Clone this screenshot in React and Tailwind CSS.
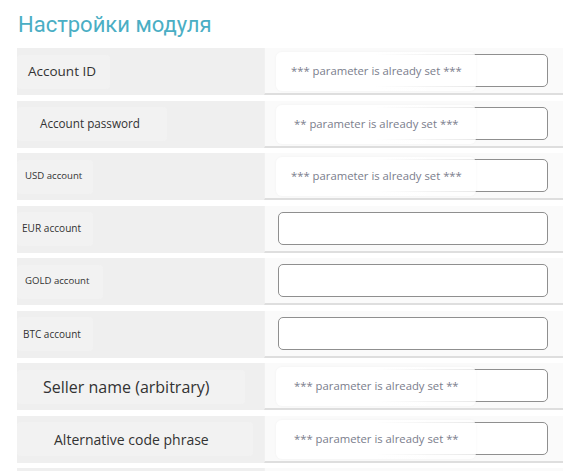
import React from "react";

const rows = [
  { label: "Account ID", size: "text-[13.5px]", px: "pl-[11px]", boxW: "w-[93px]", value: "*** parameter is already set ***", tpl: "pl-[15px]" },
  { label: "Account password", size: "text-[11.7px]", px: "pl-[23px]", boxW: "w-[150px]", value: "** parameter is already set ***", tpl: "pl-[18px]" },
  { label: "USD account", size: "text-[9.6px]", px: "pl-[8px]", boxW: "w-[76px]", value: "*** parameter is already set ***", tpl: "pl-[15px]" },
  { label: "EUR account", size: "text-[10.1px]", px: "pl-[5px]", boxW: "w-[76px]", value: null },
  { label: "GOLD account", size: "text-[9.6px]", px: "pl-[8px]", boxW: "w-[86px]", value: null },
  { label: "BTC account", size: "text-[10px]", px: "pl-[6px]", boxW: "w-[76px]", value: null },
  { label: "Seller name (arbitrary)", size: "text-[16px]", px: "pl-[26px]", boxW: "w-[228px]", value: "*** parameter is already set **", tpl: "pl-[18px]" },
  { label: "Alternative code phrase", size: "text-[14px]", px: "pl-[37px]", boxW: "w-[236px]", value: "*** parameter is already set **", tpl: "pl-[18px]" },
];

function Row({ r }) {
  return (
    <div className="flex h-[47px] mb-[5.5px]">
      <div className="w-[247px] shrink-0 bg-[#efefef] flex items-center">
        {r && (
          <div className={`h-[34px] ${r.boxW} bg-[#f2f2f2] rounded-sm flex items-center ${r.px} whitespace-nowrap ${r.size} text-[#333]`}>
            {r.label}
          </div>
        )}
      </div>
      <div className="flex-1 bg-[#fafafa] border-b-2 border-[#dedede] border-l border-l-[#f1f1f1] pl-[13px] pt-[6px]">
        <div className="relative w-[270px] h-[33px] border border-[#8f8f8f] rounded-[5px] bg-white">
          {r && r.value && (
            <div className={`absolute left-[-3px] top-[-3px] h-[39px] w-[200px] rounded-[6px] bg-gradient-to-r from-white via-white to-white/80 shadow-[0_0_3px_rgba(0,0,0,0.04)] flex items-center ${r.tpl} text-[11.3px] text-[#7a7d8c] whitespace-nowrap`}>
              {r.value}
            </div>
          )}
        </div>
      </div>
    </div>
  );
}

export default function App() {
  return (
    <div className="w-[563px] h-[471px] overflow-hidden bg-white" style={{ fontFamily: '"Open Sans", "Noto Sans", sans-serif' }}>
      <h1 className="pl-[18px] pt-[10px] h-[48px] text-[22px] leading-[30px] text-[#4aaec4]" style={{ fontFamily: 'Roboto, "Noto Sans", sans-serif' }}>
        Настройки модуля
      </h1>
      <div className="pl-[17px]">
        {rows.map((r) => (
          <Row key={r.label} r={r} />
        ))}
        <Row r={null} />
      </div>
    </div>
  );
}
